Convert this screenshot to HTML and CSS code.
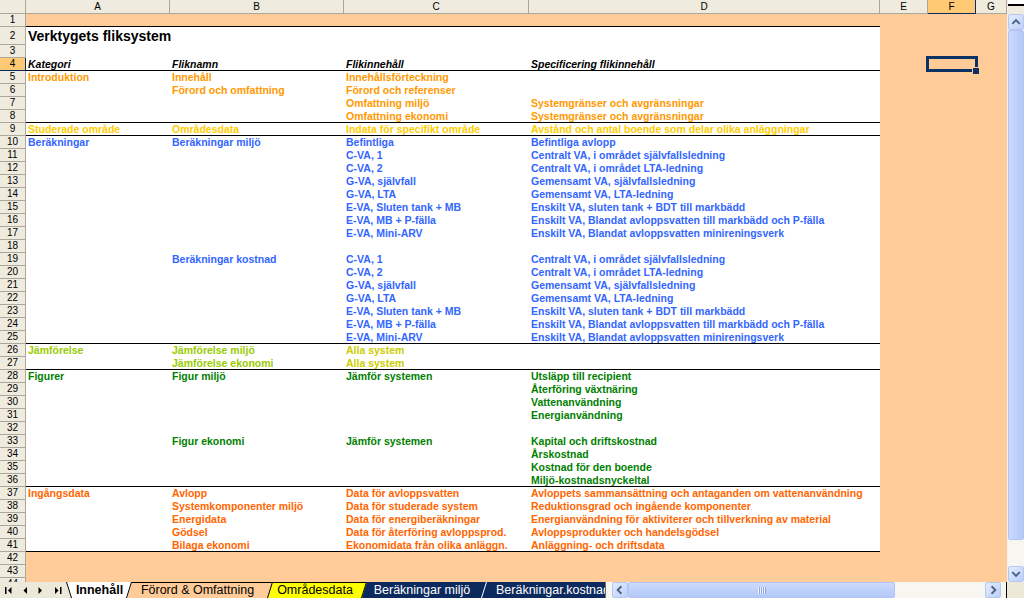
FILE: index.html
```html
<!DOCTYPE html>
<html lang="sv">
<head>
<meta charset="utf-8">
<title>Verktygets fliksystem</title>
<link rel="stylesheet" href="styles.css">
</head>
<body>
<div class="app">
  <div class="main">
    <div class="sheet">
      <div class="hdr">
        <div></div><div>A</div><div>B</div><div>C</div><div>D</div><div>E</div><div class="sel">F</div><div>G</div>
      </div>
      <div class="row ln"><div class="rh">1</div><div class="body"></div><div class="rest"></div></div>
      <div class="row r2 w"><div class="rh">2</div><div class="body"><span class="ca title">Verktygets fliksystem</span></div><div class="rest"></div></div>
      <div class="row w"><div class="rh">3</div><div class="body"></div><div class="rest"></div></div>
      <div class="row w ln cur"><div class="rh">4</div><div class="body h"><span class="ca">Kategori</span><span class="cb">Fliknamn</span><span class="cc">Flikinnehåll</span><span class="cd">Specificering flikinnehåll</span></div><div class="rest"><div class="selcell"></div></div></div>
      <div class="row w"><div class="rh">5</div><div class="body o1"><span class="ca">Introduktion</span><span class="cb">Innehåll</span><span class="cc">Innehållsförteckning</span></div><div class="rest"></div></div>
      <div class="row w"><div class="rh">6</div><div class="body o1"><span class="cb">Förord och omfattning</span><span class="cc">Förord och referenser</span></div><div class="rest"></div></div>
      <div class="row w"><div class="rh">7</div><div class="body o1"><span class="cc">Omfattning miljö</span><span class="cd">Systemgränser och avgränsningar</span></div><div class="rest"></div></div>
      <div class="row w ln"><div class="rh">8</div><div class="body o1"><span class="cc">Omfattning ekonomi</span><span class="cd">Systemgränser och avgränsningar</span></div><div class="rest"></div></div>
      <div class="row w ln"><div class="rh">9</div><div class="body o2"><span class="ca">Studerade område</span><span class="cb">Områdesdata</span><span class="cc">Indata för specifikt område</span><span class="cd">Avstånd och antal boende som delar olika anläggningar</span></div><div class="rest"></div></div>
      <div class="row w"><div class="rh">10</div><div class="body bl"><span class="ca">Beräkningar</span><span class="cb">Beräkningar miljö</span><span class="cc">Befintliga</span><span class="cd">Befintliga avlopp</span></div><div class="rest"></div></div>
      <div class="row w"><div class="rh">11</div><div class="body bl"><span class="cc">C-VA, 1</span><span class="cd">Centralt VA, i området självfallsledning</span></div><div class="rest"></div></div>
      <div class="row w"><div class="rh">12</div><div class="body bl"><span class="cc">C-VA, 2</span><span class="cd">Centralt VA, i området LTA-ledning</span></div><div class="rest"></div></div>
      <div class="row w"><div class="rh">13</div><div class="body bl"><span class="cc">G-VA, självfall</span><span class="cd">Gemensamt VA, självfallsledning</span></div><div class="rest"></div></div>
      <div class="row w"><div class="rh">14</div><div class="body bl"><span class="cc">G-VA, LTA</span><span class="cd">Gemensamt VA, LTA-ledning</span></div><div class="rest"></div></div>
      <div class="row w"><div class="rh">15</div><div class="body bl"><span class="cc">E-VA, Sluten tank + MB</span><span class="cd">Enskilt VA, sluten tank + BDT till markbädd</span></div><div class="rest"></div></div>
      <div class="row w"><div class="rh">16</div><div class="body bl"><span class="cc">E-VA, MB + P-fälla</span><span class="cd">Enskilt VA, Blandat avloppsvatten till markbädd och P-fälla</span></div><div class="rest"></div></div>
      <div class="row w"><div class="rh">17</div><div class="body bl"><span class="cc">E-VA, Mini-ARV</span><span class="cd">Enskilt VA, Blandat avloppsvatten minireningsverk</span></div><div class="rest"></div></div>
      <div class="row w"><div class="rh">18</div><div class="body"></div><div class="rest"></div></div>
      <div class="row w"><div class="rh">19</div><div class="body bl"><span class="cb">Beräkningar kostnad</span><span class="cc">C-VA, 1</span><span class="cd">Centralt VA, i området självfallsledning</span></div><div class="rest"></div></div>
      <div class="row w"><div class="rh">20</div><div class="body bl"><span class="cc">C-VA, 2</span><span class="cd">Centralt VA, i området LTA-ledning</span></div><div class="rest"></div></div>
      <div class="row w"><div class="rh">21</div><div class="body bl"><span class="cc">G-VA, självfall</span><span class="cd">Gemensamt VA, självfallsledning</span></div><div class="rest"></div></div>
      <div class="row w"><div class="rh">22</div><div class="body bl"><span class="cc">G-VA, LTA</span><span class="cd">Gemensamt VA, LTA-ledning</span></div><div class="rest"></div></div>
      <div class="row w"><div class="rh">23</div><div class="body bl"><span class="cc">E-VA, Sluten tank + MB</span><span class="cd">Enskilt VA, sluten tank + BDT till markbädd</span></div><div class="rest"></div></div>
      <div class="row w"><div class="rh">24</div><div class="body bl"><span class="cc">E-VA, MB + P-fälla</span><span class="cd">Enskilt VA, Blandat avloppsvatten till markbädd och P-fälla</span></div><div class="rest"></div></div>
      <div class="row w ln"><div class="rh">25</div><div class="body bl"><span class="cc">E-VA, Mini-ARV</span><span class="cd">Enskilt VA, Blandat avloppsvatten minireningsverk</span></div><div class="rest"></div></div>
      <div class="row w"><div class="rh">26</div><div class="body lm"><span class="ca">Jämförelse</span><span class="cb">Jämförelse miljö</span><span class="cc al">Alla system</span></div><div class="rest"></div></div>
      <div class="row w ln"><div class="rh">27</div><div class="body lm"><span class="cb">Jämförelse ekonomi</span><span class="cc al">Alla system</span></div><div class="rest"></div></div>
      <div class="row w"><div class="rh">28</div><div class="body gr"><span class="ca">Figurer</span><span class="cb">Figur miljö</span><span class="cc">Jämför systemen</span><span class="cd">Utsläpp till recipient</span></div><div class="rest"></div></div>
      <div class="row w"><div class="rh">29</div><div class="body gr"><span class="cd">Återföring växtnäring</span></div><div class="rest"></div></div>
      <div class="row w"><div class="rh">30</div><div class="body gr"><span class="cd">Vattenanvändning</span></div><div class="rest"></div></div>
      <div class="row w"><div class="rh">31</div><div class="body gr"><span class="cd">Energianvändning</span></div><div class="rest"></div></div>
      <div class="row w"><div class="rh">32</div><div class="body"></div><div class="rest"></div></div>
      <div class="row w"><div class="rh">33</div><div class="body gr"><span class="cb">Figur ekonomi</span><span class="cc">Jämför systemen</span><span class="cd">Kapital och driftskostnad</span></div><div class="rest"></div></div>
      <div class="row w"><div class="rh">34</div><div class="body gr"><span class="cd">Årskostnad</span></div><div class="rest"></div></div>
      <div class="row w"><div class="rh">35</div><div class="body gr"><span class="cd">Kostnad för den boende</span></div><div class="rest"></div></div>
      <div class="row w ln"><div class="rh">36</div><div class="body gr"><span class="cd">Miljö-kostnadsnyckeltal</span></div><div class="rest"></div></div>
      <div class="row w"><div class="rh">37</div><div class="body o3"><span class="ca">Ingångsdata</span><span class="cb">Avlopp</span><span class="cc">Data för avloppsvatten</span><span class="cd">Avloppets sammansättning och antaganden om vattenanvändning</span></div><div class="rest"></div></div>
      <div class="row w"><div class="rh">38</div><div class="body o3"><span class="cb">Systemkomponenter miljö</span><span class="cc">Data för studerade system</span><span class="cd">Reduktionsgrad och ingående komponenter</span></div><div class="rest"></div></div>
      <div class="row w"><div class="rh">39</div><div class="body o3"><span class="cb">Energidata</span><span class="cc">Data för energiberäkningar</span><span class="cd">Energianvändning för aktiviterer och tillverkning av material</span></div><div class="rest"></div></div>
      <div class="row w"><div class="rh">40</div><div class="body o3"><span class="cb">Gödsel</span><span class="cc">Data för återföring avloppsprod.</span><span class="cd">Avloppsprodukter och handelsgödsel</span></div><div class="rest"></div></div>
      <div class="row w ln"><div class="rh">41</div><div class="body o3"><span class="cb">Bilaga ekonomi</span><span class="cc">Ekonomidata från olika anläggn.</span><span class="cd">Anläggning- och driftsdata</span></div><div class="rest"></div></div>
      <div class="row"><div class="rh">42</div><div class="body"></div><div class="rest"></div></div>
      <div class="row"><div class="rh">43</div><div class="body"></div><div class="rest"></div></div>
      <div class="row"><div class="rh">44</div><div class="body"></div><div class="rest"></div></div>
    </div>
    <div class="vscroll">
      <div class="vsplit"></div>
      <div class="sbtn"><svg width="15" height="14" viewBox="0 0 15 14"><polyline points="3.5,9 7.5,5 11.5,9" fill="none" stroke="#4d6185" stroke-width="2"/></svg></div>
      <div class="vthumb"></div>
      <div class="vtrack"></div>
      <div class="sbtn"><svg width="15" height="14" viewBox="0 0 15 14"><polyline points="3.5,5 7.5,9 11.5,5" fill="none" stroke="#4d6185" stroke-width="2"/></svg></div>
    </div>
  </div>
  <div class="bar">
    <div class="nav">
      <svg width="66" height="16" viewBox="0 0 66 16">
        <rect x="5" y="5" width="1.5" height="7" fill="#000"/>
        <polygon points="11.5,5 11.5,12 8,8.5" fill="#000"/>
        <polygon points="27,5 27,12 23.5,8.5" fill="#000"/>
        <polygon points="38.5,5 38.5,12 42,8.5" fill="#000"/>
        <polygon points="55,5 55,12 58.5,8.5" fill="#000"/>
        <rect x="60" y="5" width="1.5" height="7" fill="#000"/>
      </svg>
    </div>
    <div class="tabs">
      <div class="tab t1"><svg width="66" height="16" viewBox="0 0 66 16"><polygon points="0,0 66,0 61,16 5,16" fill="#ffffff"/><path d="M0.5 0L5.5 16M60.5 16L65.5 0" stroke="#000" fill="none"/></svg><span>Innehåll</span></div>
      <div class="tab t2"><svg width="151" height="16" viewBox="0 0 151 16"><polygon points="0,0 151,0 146,16 5,16" fill="#ffcc99"/><path d="M0 0.5H151M145.5 16L150.5 0" stroke="#000" fill="none"/></svg><span>Förord &amp; Omfattning</span></div>
      <div class="tab t3"><svg width="104" height="16" viewBox="0 0 104 16"><polygon points="0,0 104,0 99,16 5,16" fill="#ffff00"/><path d="M0 0.5H104M98.5 16L103.5 0" stroke="#000" fill="none"/></svg><span>Områdesdata</span></div>
      <div class="tab t4"><svg width="130" height="16" viewBox="0 0 130 16"><polygon points="0,0 130,0 125,16 5,16" fill="#0c2a5e"/><path d="M124.5 16L129.5 0" stroke="#ffffff" fill="none"/></svg><span>Beräkningar miljö</span></div>
      <div class="tab t5"><svg width="140" height="16" viewBox="0 0 140 16"><polygon points="0,0 140,0 135,16 5,16" fill="#0c2a5e"/></svg><span>Beräkningar.kostnad</span></div>
    </div>
    <div class="hscroll">
      <div class="sbtn h"><svg width="15" height="14" viewBox="0 0 15 14"><polyline points="9,3 5,7 9,11" fill="none" stroke="#4d6185" stroke-width="2"/></svg></div>
      <div class="hthumb"><i class="grip"></i></div>
      <div class="htrack"></div>
      <div class="sbtn h"><svg width="15" height="14" viewBox="0 0 15 14"><polyline points="6,3 10,7 6,11" fill="none" stroke="#4d6185" stroke-width="2"/></svg></div>
    </div>
    <div class="corner"></div>
  </div>
</div>
</body>
</html>
```

FILE: styles.css
```css
* { box-sizing: border-box; margin: 0; padding: 0; }
html, body { width: 1024px; height: 598px; overflow: hidden; }
body { font-family: "Liberation Sans", Arial, sans-serif; background: #ece9d8; color: #000; }

.app { display: flex; flex-direction: column; height: 598px; }
.main { display: flex; height: 582px; }

/* ---------- sheet ---------- */
.sheet { width: 1007px; height: 582px; overflow: hidden; background: #ffcc99; flex: none; }

.hdr {
  display: grid;
  grid-template-columns: 26px 144px 174px 185px 351px 48px 48px 31px;
  height: 14px;
  background: #efebde;
}
.hdr > div {
  border-right: 1px solid #aca899;
  border-bottom: 1px solid #aca899;
  font-size: 10px;
  line-height: 13px;
  text-align: center;
}
.hdr > .sel {
  background: #ffc873;
  border-right-color: #0a2a66;
  border-bottom-color: #0a2a66;
}

.row {
  display: grid;
  grid-template-columns: 26px 854px 127px;
  height: 13px;
}
.row.r2 { height: 18px; }

.rh {
  background: #efebde;
  border-right: 1px solid #aca899;
  border-bottom: 1px solid #aca899;
  font-size: 10px;
  line-height: 12px;
  text-align: center;
}
.row.r2 .rh { line-height: 17px; }
.row.cur .rh {
  background: #ffc873;
  border-bottom-color: #0a2a66;
  border-right-color: #0a2a66;
}

.body {
  display: grid;
  grid-template-columns: 144px 174px 185px 351px;
  font-weight: bold;
  font-size: 10.5px;
  line-height: 13px;
}
.row.w .body { background: #ffffff; }
.row.ln .body { box-shadow: inset 0 -1px 0 #000; }

.body > span { grid-row: 1; padding-left: 2px; white-space: nowrap; }
.ca { grid-column: 1; }
.cb { grid-column: 2; }
.cc { grid-column: 3; }
.cd { grid-column: 4; }

.body .title { font-size: 14px; line-height: 18px; color: #000; }
.body.h { font-style: italic; color: #000; }

.o1 { color: #ff9900; }
.o2 { color: #ffcc00; }
.bl { color: #3366ff; }
.lm { color: #99cc00; }
.lm .al { color: #cccc00; }
.gr { color: #008000; }
.o3 { color: #ff6600; }

.rest { display: grid; grid-template-columns: 48px 48px 31px; }
.selcell { grid-column: 2; position: relative; }
.selcell::before {
  content: "";
  position: absolute;
  left: -2px; top: -2px; right: -2px; bottom: -1px;
  border: 3px solid #0c3264;
}
.selcell::after {
  content: "";
  position: absolute;
  right: -3px; bottom: -3px;
  width: 6px; height: 6px;
  background: #0c3264;
  border-left: 1px solid #ffcc99;
  border-top: 1px solid #ffcc99;
}

/* ---------- vertical scrollbar ---------- */
.vscroll {
  width: 17px;
  flex: none;
  display: flex;
  flex-direction: column;
  background: #f7f6f0;
  border-left: 1px solid #f3f1ea;
}
.vsplit {
  height: 14px;
  flex: none;
  background: linear-gradient(#ffffff 0 4px, #000 4px 6px, #efebde 6px);
}
.sbtn {
  height: 16px;
  flex: none;
  display: flex;
  align-items: center;
  justify-content: center;
  border: 1px solid #b5c8f2;
  border-radius: 2px;
  background: linear-gradient(135deg, #e4ecfe, #bccffb);
}
.vthumb {
  height: 510px;
  flex: none;
  border: 1px solid #b1c5f4;
  border-radius: 2px;
  background: linear-gradient(90deg, #cddafd, #bccffb 60%, #b4c8f7);
}
.vtrack { flex: 1; }

/* ---------- bottom bar ---------- */
.bar { display: flex; height: 16px; background: #ece9d8; }
.nav { width: 66px; flex: none; }
.nav svg { display: block; }

.tabs { width: 539px; flex: none; display: flex; overflow: hidden; }
.tab {
  display: grid;
  flex: none;
  height: 16px;
  position: relative;
  font-size: 12.5px;
  line-height: 16px;
}
.tab > * { grid-area: 1 / 1; }
.tab svg { display: block; }
.tab span { justify-self: center; white-space: nowrap; }
.t1 { z-index: 5; font-weight: bold; }
.t1 span { padding-left: 1px; }
.t2 { z-index: 4; margin-left: -10px; }
.t3 { z-index: 3; margin-left: -10px; }
.t4 { z-index: 2; margin-left: -10px; color: #fff; }
.t5 { z-index: 1; margin-left: -10px; color: #fff; }
.t5 span { justify-self: start; padding-left: 19px; }

.hscroll {
  width: 401px;
  flex: none;
  display: flex;
  padding: 0 5px 0 6px;
  background: #f7f6f0;
  border-left: 1px solid #6d6b62;
}
.sbtn.h { width: 16px; height: 16px; }
.hthumb {
  width: 267px;
  flex: none;
  display: flex;
  align-items: center;
  justify-content: center;
  border: 1px solid #b1c5f4;
  border-radius: 2px;
  background: linear-gradient(180deg, #cddafd, #bccffb 60%, #b4c8f7);
}
.grip {
  width: 8px;
  height: 7px;
  background: repeating-linear-gradient(90deg, #eef3fe 0 1px, #8ca6e0 1px 2px);
}
.htrack { flex: 1; }
.corner { flex: 1; border-left: 1px solid #000; background: #ece9d8; }
```
